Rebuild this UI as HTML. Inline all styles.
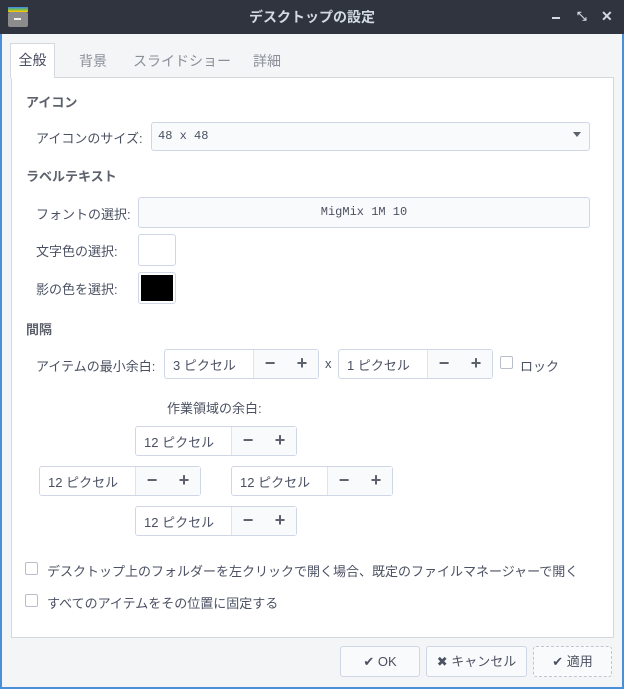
<!DOCTYPE html>
<html><head><meta charset="utf-8"><style>
*{box-sizing:border-box;margin:0;padding:0}
body{width:624px;height:689px;overflow:hidden;background:#4a90d9;font-family:"Liberation Sans","Noto Sans CJK JP",sans-serif;font-size:13px;color:#4b5162;position:relative}
.a{position:absolute}
#win{left:2px;top:0;width:620px;height:687px;background:#f4f5f7}
#title{left:0;top:0;width:624px;height:34px;background:#2f343f;color:#d3dae3;font-weight:bold;font-size:14px;text-align:center;line-height:34px}
#panel{left:11px;top:77px;width:603px;height:561px;background:#fff;border:1px solid #d5d8dd}
#tab{left:10px;top:43px;width:45px;height:35px;background:#fff;border:1px solid #d5d8dd;border-bottom:none;text-align:center;line-height:33px;color:#4b5162;font-size:14px}
.tl{color:#8a8f99;top:51px;font-size:14px}
.b{font-weight:bold;color:#5c616c}
.box{background:#f9fafb;border:1px solid #cfd6e6;border-radius:3px}
.spin{background:#fff;border:1px solid #cfd6e6;border-radius:3px;height:30px}
.spin .e{position:absolute;left:8px;top:5px}
.spin .bt{position:absolute;top:0;right:0;height:28px;background:#f9fafb;border-left:1px solid #e0e3e8;font-size:18px;font-weight:bold;color:#5c616c;line-height:27px}
.spin .bt span{display:inline-block;width:32px;text-align:center}
.cb{width:13px;height:13px;border:1px solid #b8bfca;border-radius:2px;background:#fff}
.btn{background:#f9fafb;border:1px solid #cfd6e6;border-radius:3px;height:31px;text-align:center;line-height:29px;color:#4b5162}
.mono{font-family:"Liberation Mono","Noto Sans CJK JP",monospace;font-size:12px}
</style></head><body>
<div class="a" id="win"></div>
<div class="a" id="title">デスクトップの設定</div>
<div class="a" style="left:8px;top:7px;width:20px;height:5px;background:linear-gradient(#4a90d9 0 33%,#73c048 33% 66%,#f5c211 66%)"></div>
<div class="a" style="left:8px;top:12px;width:20px;height:15px;background:#8c8c8c;border-radius:2px"></div>
<div class="a" style="left:14px;top:18px;width:7px;height:2px;background:#eee"></div>
<div class="a" style="left:552px;top:17px;width:8px;height:2px;background:#d3dae3"></div>
<div class="a" style="left:577px;top:9px;color:#d3dae3;font-size:12px;font-weight:bold">⤡</div>
<div class="a" style="left:601px;top:8px;color:#d3dae3;font-size:14px;font-weight:bold">✕</div>
<div class="a" id="panel"></div>
<div class="a" id="tab">全般</div>
<div class="a tl" style="left:79px">背景</div>
<div class="a tl" style="left:133px">スライドショー</div>
<div class="a tl" style="left:253px">詳細</div>

<div class="a b" style="left:26px;top:92px">アイコン</div>
<div class="a" style="left:36px;top:128px">アイコンのサイズ:</div>
<div class="a box" style="left:151px;top:122px;width:439px;height:29px"></div>
<div class="a mono" style="left:158px;top:129px">48 x 48</div>
<div class="a" style="left:573px;top:132px;width:0;height:0;border-left:4px solid transparent;border-right:4px solid transparent;border-top:5px solid #5c616c"></div>

<div class="a b" style="left:26px;top:166px">ラベルテキスト</div>
<div class="a" style="left:36px;top:204px">フォントの選択:</div>
<div class="a box mono" style="left:138px;top:197px;width:452px;height:31px;text-align:center;line-height:29px">MigMix 1M 10</div>
<div class="a" style="left:36px;top:241px">文字色の選択:</div>
<div class="a box" style="left:138px;top:234px;width:38px;height:32px;background:#fff"></div>
<div class="a" style="left:36px;top:279px">影の色を選択:</div>
<div class="a box" style="left:138px;top:272px;width:38px;height:32px;background:#fff;padding:2px"><div style="width:100%;height:100%;background:#000"></div></div>

<div class="a b" style="left:26px;top:319px">間隔</div>
<div class="a" style="left:36px;top:356px">アイテムの最小余白:</div>
<div class="a spin" style="left:164px;top:349px;width:155px"><span class="e">3 ピクセル</span><div class="bt"><span>−</span><span>+</span></div></div>
<div class="a" style="left:325px;top:356px">x</div>
<div class="a spin" style="left:338px;top:349px;width:155px"><span class="e">1 ピクセル</span><div class="bt"><span>−</span><span>+</span></div></div>
<div class="a cb" style="left:500px;top:356px"></div>
<div class="a" style="left:520px;top:356px">ロック</div>

<div class="a" style="left:167px;top:398px">作業領域の余白:</div>
<div class="a spin" style="left:135px;top:426px;width:162px"><span class="e">12 ピクセル</span><div class="bt"><span>−</span><span>+</span></div></div>
<div class="a spin" style="left:39px;top:466px;width:162px"><span class="e">12 ピクセル</span><div class="bt"><span>−</span><span>+</span></div></div>
<div class="a spin" style="left:231px;top:466px;width:162px"><span class="e">12 ピクセル</span><div class="bt"><span>−</span><span>+</span></div></div>
<div class="a spin" style="left:135px;top:506px;width:162px"><span class="e">12 ピクセル</span><div class="bt"><span>−</span><span>+</span></div></div>

<div class="a cb" style="left:25px;top:562px"></div>
<div class="a" style="left:47px;top:561px">デスクトップ上のフォルダーを左クリックで開く場合、既定のファイルマネージャーで開く</div>
<div class="a cb" style="left:25px;top:594px"></div>
<div class="a" style="left:47px;top:593px">すべてのアイテムをその位置に固定する</div>

<div class="a btn" style="left:340px;top:646px;width:80px">✔ OK</div>
<div class="a btn" style="left:426px;top:646px;width:101px">✖ キャンセル</div>
<div class="a btn" style="left:533px;top:646px;width:79px;border:1px dashed #c0c5cf">✔ 適用</div>
</body></html>
